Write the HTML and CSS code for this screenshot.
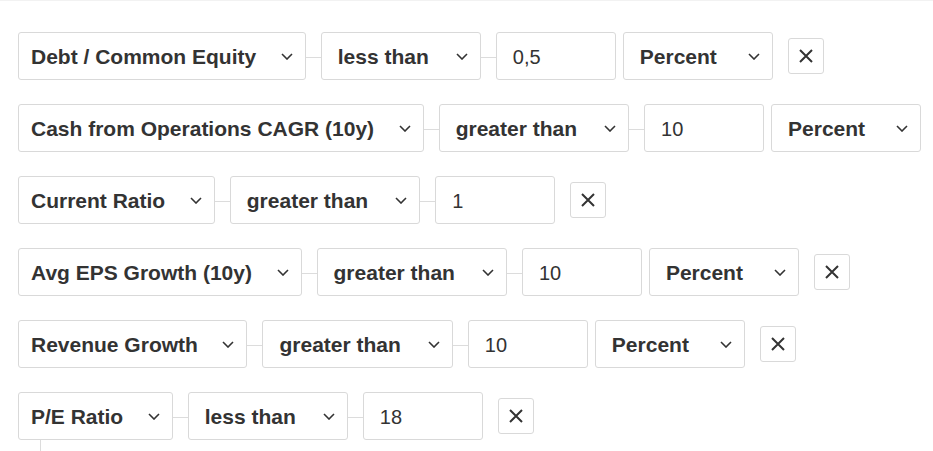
FILE: index.html
```html
<!DOCTYPE html>
<html lang="en">
<head>
<meta charset="utf-8">
<title>Screener filters</title>
<link rel="stylesheet" href="styles.css">
</head>
<body>
<div class="filters">
  <div class="row">
    <div class="sel sel-field"><span>Debt / Common Equity</span><svg class="chev" viewBox="0 0 12 7"><polyline points="1,1 6,6 11,1"/></svg></div>
    <span class="link"></span>
    <div class="sel sel-op"><span>less than</span><svg class="chev" viewBox="0 0 12 7"><polyline points="1,1 6,6 11,1"/></svg></div>
    <span class="link"></span>
    <div class="val">0,5</div>
    <div class="sel sel-unit"><span>Percent</span><svg class="chev" viewBox="0 0 12 7"><polyline points="1,1 6,6 11,1"/></svg></div>
    <button class="del"><svg viewBox="0 0 14 14"><path d="M1 1L13 13M13 1L1 13"/></svg></button>
  </div>
  <div class="row">
    <div class="sel sel-field"><span>Cash from Operations CAGR (10y)</span><svg class="chev" viewBox="0 0 12 7"><polyline points="1,1 6,6 11,1"/></svg></div>
    <span class="link"></span>
    <div class="sel sel-op"><span>greater than</span><svg class="chev" viewBox="0 0 12 7"><polyline points="1,1 6,6 11,1"/></svg></div>
    <span class="link"></span>
    <div class="val">10</div>
    <div class="sel sel-unit"><span>Percent</span><svg class="chev" viewBox="0 0 12 7"><polyline points="1,1 6,6 11,1"/></svg></div>
    <button class="del"><svg viewBox="0 0 14 14"><path d="M1 1L13 13M13 1L1 13"/></svg></button>
  </div>
  <div class="row">
    <div class="sel sel-field"><span>Current Ratio</span><svg class="chev" viewBox="0 0 12 7"><polyline points="1,1 6,6 11,1"/></svg></div>
    <span class="link"></span>
    <div class="sel sel-op"><span>greater than</span><svg class="chev" viewBox="0 0 12 7"><polyline points="1,1 6,6 11,1"/></svg></div>
    <span class="link"></span>
    <div class="val">1</div>
    <button class="del"><svg viewBox="0 0 14 14"><path d="M1 1L13 13M13 1L1 13"/></svg></button>
  </div>
  <div class="row">
    <div class="sel sel-field"><span>Avg EPS Growth (10y)</span><svg class="chev" viewBox="0 0 12 7"><polyline points="1,1 6,6 11,1"/></svg></div>
    <span class="link"></span>
    <div class="sel sel-op"><span>greater than</span><svg class="chev" viewBox="0 0 12 7"><polyline points="1,1 6,6 11,1"/></svg></div>
    <span class="link"></span>
    <div class="val">10</div>
    <div class="sel sel-unit"><span>Percent</span><svg class="chev" viewBox="0 0 12 7"><polyline points="1,1 6,6 11,1"/></svg></div>
    <button class="del"><svg viewBox="0 0 14 14"><path d="M1 1L13 13M13 1L1 13"/></svg></button>
  </div>
  <div class="row">
    <div class="sel sel-field"><span>Revenue Growth</span><svg class="chev" viewBox="0 0 12 7"><polyline points="1,1 6,6 11,1"/></svg></div>
    <span class="link"></span>
    <div class="sel sel-op"><span>greater than</span><svg class="chev" viewBox="0 0 12 7"><polyline points="1,1 6,6 11,1"/></svg></div>
    <span class="link"></span>
    <div class="val">10</div>
    <div class="sel sel-unit"><span>Percent</span><svg class="chev" viewBox="0 0 12 7"><polyline points="1,1 6,6 11,1"/></svg></div>
    <button class="del"><svg viewBox="0 0 14 14"><path d="M1 1L13 13M13 1L1 13"/></svg></button>
  </div>
  <div class="row last">
    <div class="sel sel-field"><span>P/E Ratio</span><svg class="chev" viewBox="0 0 12 7"><polyline points="1,1 6,6 11,1"/></svg></div>
    <span class="link"></span>
    <div class="sel sel-op"><span>less than</span><svg class="chev" viewBox="0 0 12 7"><polyline points="1,1 6,6 11,1"/></svg></div>
    <span class="link"></span>
    <div class="val">18</div>
    <button class="del"><svg viewBox="0 0 14 14"><path d="M1 1L13 13M13 1L1 13"/></svg></button>
  </div>
  <div class="tail"></div>
</div>
</body>
</html>
```
FILE: styles.css
```css
html, body {
  margin: 0;
  padding: 0;
  overflow: hidden;
  background: #fff;
}
body {
  font-family: "Liberation Sans", Arial, sans-serif;
  color: #333;
}
.filters {
  border-top: 1px solid #f2f2f2;
  padding: 31px 0 0 18px;
}
.row {
  display: flex;
  align-items: flex-start;
  height: 48px;
  margin-bottom: 24px;
  white-space: nowrap;
}
.row.last {
  margin-bottom: 0;
}
.row > * {
  flex-shrink: 0;
}
.sel {
  box-sizing: border-box;
  height: 48px;
  display: flex;
  align-items: center;
  border: 1px solid #d9d9d9;
  border-radius: 3px;
  font-size: 21px;
  font-weight: bold;
  background: #fff;
}
.sel > span {
  padding-top: 2px;
}
.sel-field {
  padding: 0 12px 0 12px;
  gap: 24.6px;
}
.sel-op {
  padding: 0 12px 0 16px;
  gap: 27px;
}
.sel-unit {
  width: 150px;
  padding: 0 12px 0 16px;
  justify-content: space-between;
  margin-left: 7px;
}
.chev {
  width: 12px;
  height: 7px;
  fill: none;
  stroke: #333;
  stroke-width: 1.6;
}
.link {
  width: 15px;
  height: 1px;
  margin-top: 25px;
  background: #dcdcdc;
}
.val {
  box-sizing: border-box;
  width: 120px;
  height: 48px;
  display: flex;
  align-items: center;
  padding: 2px 0 0 16px;
  border: 1px solid #d9d9d9;
  border-radius: 3px;
  font-size: 20px;
  color: #333;
}
.del {
  box-sizing: border-box;
  width: 36px;
  height: 36px;
  margin: 6px 0 0 15px;
  padding: 0;
  display: flex;
  align-items: center;
  justify-content: center;
  border: 1px solid #d9d9d9;
  border-radius: 3px;
  background: #fff;
}
.del svg {
  width: 14px;
  height: 14px;
  fill: none;
  stroke: #333;
  stroke-width: 2;
}
.tail {
  width: 1px;
  height: 30px;
  margin-left: 22px;
  background: #dcdcdc;
}
```
